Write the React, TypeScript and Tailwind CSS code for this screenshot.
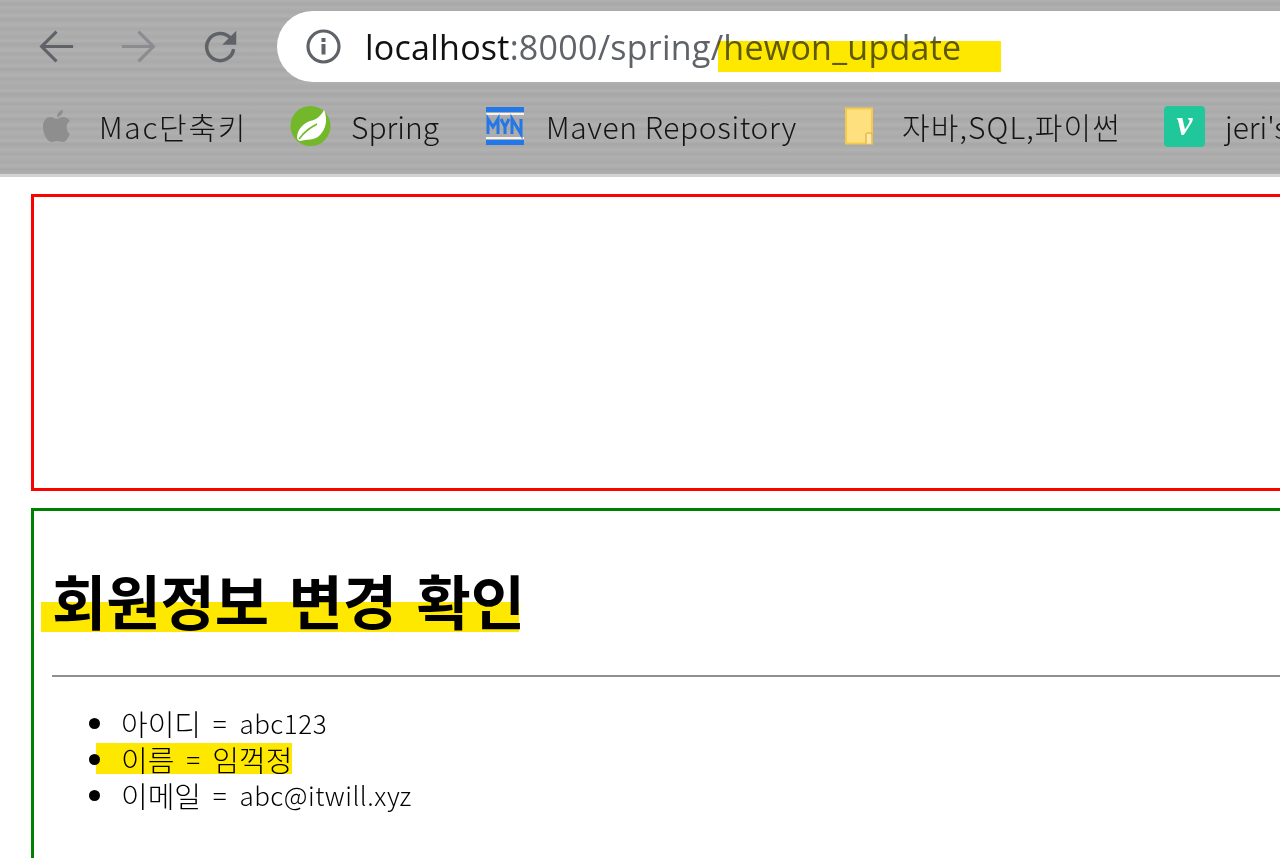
import React from "react";

const FONT = "font-['Noto_Sans_CJK_KR','Noto_Sans',sans-serif]";

function Marker({ className }: { className: string }) {
  return <span className={`absolute bg-[#ffe800] mix-blend-multiply ${className}`} />;
}

function Nav() {
  return (
    <div className="flex items-center gap-[47px] pl-[39px] pr-[39px] shrink-0">
      <svg width="35" height="35" viewBox="0 0 40 40" fill="none" stroke="#5f6368" strokeWidth="3.6">
        <path d="M39 20H4M20 3 3 20l17 17" />
      </svg>
      <svg width="35" height="35" viewBox="0 0 40 40" fill="none" stroke="#8a8c90" strokeWidth="3.6">
        <path d="M1 20h35M20 3l17 17-17 17" />
      </svg>
      <svg width="35" height="35" viewBox="0 0 40 40" fill="none">
        <path d="M35 23a15.5 15.5 0 1 1-4-13" stroke="#5f6368" strokeWidth="4" />
        <path d="M38 2v16H22z" fill="#5f6368" />
      </svg>
    </div>
  );
}

function AddressBar() {
  return (
    <div className="relative flex-1 h-[71px] bg-white rounded-l-[36px] flex items-center pl-[29px]">
      <svg width="35" height="35" viewBox="0 0 35 35" fill="none" className="shrink-0">
        <circle cx="17.5" cy="17.5" r="15.5" stroke="#5f6368" strokeWidth="3.2" />
        <rect x="15.5" y="15" width="4" height="10.5" fill="#5f6368" />
        <rect x="15.5" y="9" width="4" height="4" fill="#5f6368" />
      </svg>
      <span className="ml-[24px] text-[34px] leading-[40px] tracking-[0.25px] text-[#5f6368] whitespace-nowrap font-['Open_Sans',sans-serif]">
        <span className="text-[#111]">localhost</span>:8000/spring/hewon_update
      </span>
      <Marker className="left-[441px] top-[30px] w-[283px] h-[31px]" />
    </div>
  );
}

function Bookmark({ icon, label, cls }: { icon: React.ReactNode; label: string; cls: string }) {
  return (
    <div className={`flex items-center shrink-0 ${cls}`}>
      {icon}
      <span className={`text-[30px] leading-[40px] text-[#141414] whitespace-nowrap ${FONT} font-light`}>{label}</span>
    </div>
  );
}

const Apple = (
  <svg width="28" height="34" viewBox="0 0 28 34" fill="#8e8e8e" className="shrink-0">
    <path d="M20 1c0 4-3 7-6 7 0-4 3-7 6-7Z" />
    <path d="M14 10c2 0 4-2 7-2 3 0 5 1 7 4-5 3-4 10 0 13-2 4-4 8-7 8-2 0-4-1-6-1s-4 1-6 1C4 33 0 24 0 18 0 11 4 8 8 8c2 0 4 2 6 2Z" transform="scale(0.96 1)" />
  </svg>
);

const Leaf = (
  <svg width="41" height="42" viewBox="0 0 41 42" className="shrink-0">
    <circle cx="20.5" cy="21" r="20" fill="#73b82a" />
    <path d="M34 5c4 9 2 19-4 25-6 6-13 4-20 6-1 0-3-2-3-3 0-9 7-15 13-17 6-1 11-5 14-11Z" fill="#fff" />
    <path d="M9 34c6-8 11-11 18-15" stroke="#73b82a" strokeWidth="1.6" fill="none" />
  </svg>
);

const Maven = (
  <svg width="38" height="38" viewBox="0 0 38 38" className="shrink-0">
    <rect x="0" y="0" width="38" height="5" fill="#2477e6" />
    <rect x="0" y="6" width="38" height="2" fill="#f2f4f6" />
    <rect x="0" y="30" width="38" height="2" fill="#f2f4f6" />
    <rect x="0" y="33" width="38" height="5" fill="#2477e6" />
    <path d="M2 27V12l5 8 5-8v15M15 12l4 8 4-8M19 20v7M26 27V12l9 15V12" stroke="#2477e6" strokeWidth="3" fill="none" />
  </svg>
);

const Folder = (
  <svg width="32" height="38" viewBox="0 0 32 38" className="shrink-0">
    <path d="M2 1.5h26v35H2Z" fill="#ffe07f" stroke="#f4c94f" strokeWidth="2" />
    <path d="M22 36.5V28q0-2 2-2h2q2 0 2 2v8.5" fill="#ffeaa8" stroke="#e9bd4a" strokeWidth="1.6" />
  </svg>
);

const Vimeo = (
  <span className="w-[41px] h-[41px] rounded-[4px] bg-[#1fc79a] text-white flex items-center justify-center shrink-0 font-['Liberation_Serif',serif] italic font-bold text-[36px] leading-none pb-[6px]">
    v
  </span>
);

function Browser() {
  return (
    <header className="h-[177px] overflow-hidden bg-[#adadad] bg-[repeating-linear-gradient(180deg,rgba(255,255,255,0.05)_0px,rgba(0,0,0,0.03)_4px,rgba(255,255,255,0.03)_7px,rgba(0,0,0,0.02)_12px,rgba(255,255,255,0.05)_16px,rgba(0,0,0,0.04)_19px,rgba(255,255,255,0.05)_25px)] border-b-[3px] border-[#d2d2d2] flex flex-col">
      <div className="flex items-center pt-[11px]">
        <Nav />
        <AddressBar />
      </div>
      <div className="flex items-center pl-[43px] mt-[21px] h-[46px]">
        <Bookmark icon={Apple} label="Mac단축키" cls="gap-[28px] w-[247px] tracking-[1.7px]" />
        <Bookmark icon={Leaf} label="Spring" cls="gap-[20px] w-[196px]" />
        <Bookmark icon={Maven} label="Maven Repository" cls="gap-[22px] w-[358px] tracking-[0.6px]" />
        <Bookmark icon={Folder} label="자바,SQL,파이썬" cls="gap-[26px] w-[320px] tracking-[1.1px]" />
        <Bookmark icon={Vimeo} label="jeri's" cls="gap-[20px] w-[120px]" />
      </div>
    </header>
  );
}

function Item({ children, mark }: { children: React.ReactNode; mark?: boolean }) {
  return (
    <li className="relative h-[36px] flex items-center pl-[37px]">
      {mark && <Marker className="left-[12px] top-[1px] w-[196px] h-[31px]" />}
      <span className="absolute left-[5px] top-[12px] w-[11px] h-[11px] rounded-full bg-black" />
      <span className="text-[26px] leading-[36px] font-light text-black whitespace-nowrap [word-spacing:6px]">{children}</span>
    </li>
  );
}

function Ko({ children }: { children: React.ReactNode }) {
  return <span className="text-[29px] leading-[30px]">{children}</span>;
}

function La({ children }: { children: React.ReactNode }) {
  return <span className="align-[1.5px] tracking-[0.5px]">{children}</span>;
}

export default function App() {
  return (
    <div className={`w-[1280px] h-[858px] overflow-hidden bg-white ${FONT}`}>
      <Browser />
      <main className="pl-[31px] pt-[17px] w-[1330px]">
        <section className="h-[297px] border-[3px] border-[#ff0000]" />
        <section className="h-[400px] mt-[17px] border-[3px] border-[#008000] pl-[18px] pt-[51px]">
          <div className="relative w-fit">
            <Marker className="-left-[11px] top-[40px] w-[478px] h-[30px]" />
            <h1 className="text-[59px] leading-[76px] font-bold text-black [word-spacing:6px] whitespace-nowrap">회원정보 변경 확인</h1>
          </div>
          <hr className="mt-[37px] border-t-[2px] border-[#8f8f8f]" />
          <ul className="mt-[29px] pl-[32px]">
            <Item><Ko>아이디</Ko> <La>= abc123</La></Item>
            <Item mark><Ko>이름</Ko> <La>=</La> <Ko>임꺽정</Ko></Item>
            <Item><Ko>이메일</Ko> <La>= abc@itwill.xyz</La></Item>
          </ul>
        </section>
      </main>
    </div>
  );
}
